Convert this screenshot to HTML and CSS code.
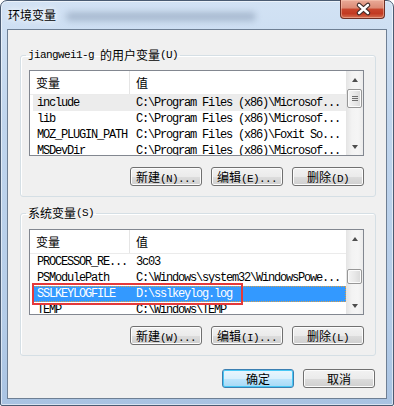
FILE: index.html
```html
<!DOCTYPE html>
<html lang="zh-CN">
<head>
    <meta charset="UTF-8">
    <title>环境变量</title>
    <link rel="stylesheet" href="styles.css">
</head>
<body>
    <div class="window">
        <div class="titlebar">
            <span class="title">环境变量</span>
            <span class="title-blur"></span>
            <button class="close" aria-label="关闭">
                <svg width="45" height="19" viewBox="0 0 45 19">
                    <path d="M19 5 L28 13 M28 5 L19 13" stroke="#3d2a28" stroke-width="4.6" stroke-linecap="round" fill="none"/>
                    <path d="M19 5 L28 13 M28 5 L19 13" stroke="#fff" stroke-width="2.4" stroke-linecap="round" fill="none"/>
                </svg>
            </button>
        </div>

        <div class="client">
            <fieldset class="group">
                <legend><span class="en">jiangwei1-g </span>的用户变量<span class="en">(U)</span></legend>
                <div class="list">
                    <div class="list-body">
                        <div class="list-head"><div class="col1">变量</div><div class="col2">值</div></div>
                        <div class="row hover"><div class="col1">include</div><div class="col2">C:\Program Files (x86)\Microsof...</div></div>
                        <div class="row"><div class="col1">lib</div><div class="col2">C:\Program Files (x86)\Microsof...</div></div>
                        <div class="row"><div class="col1">MOZ_PLUGIN_PATH</div><div class="col2">C:\Program Files (x86)\Foxit So...</div></div>
                        <div class="row"><div class="col1">MSDevDir</div><div class="col2">C:\Program Files (x86)\Microsof...</div></div>
                    </div>
                    <div class="scrollbar">
                        <div class="sb-btn"><span class="arrow-up"></span></div>
                        <div class="sb-track"><div class="thumb thumb-user"><i></i><i></i><i></i></div></div>
                        <div class="sb-btn"><span class="arrow-down"></span></div>
                    </div>
                </div>
                <div class="buttons">
                    <button class="btn">新建<span class="en">(N)...</span></button>
                    <button class="btn">编辑<span class="en">(E)...</span></button>
                    <button class="btn">删除<span class="en">(D)</span></button>
                </div>
            </fieldset>

            <fieldset class="group system">
                <legend>系统变量<span class="en">(S)</span></legend>
                <div class="list">
                    <div class="list-body">
                        <div class="list-head"><div class="col1">变量</div><div class="col2">值</div></div>
                        <div class="row"><div class="col1">PROCESSOR_RE...</div><div class="col2">3c03</div></div>
                        <div class="row"><div class="col1">PSModulePath</div><div class="col2">C:\Windows\system32\WindowsPowe...</div></div>
                        <div class="row selected"><div class="col1">SSLKEYLOGFILE</div><div class="col2">D:\sslkeylog.log</div></div>
                        <div class="row"><div class="col1">TEMP</div><div class="col2">C:\Windows\TEMP</div></div>
                    </div>
                    <div class="scrollbar">
                        <div class="sb-btn"><span class="arrow-up"></span></div>
                        <div class="sb-track"><div class="thumb thumb-system"></div></div>
                        <div class="sb-btn"><span class="arrow-down"></span></div>
                    </div>
                    <div class="mark"></div>
                </div>
                <div class="buttons">
                    <button class="btn">新建<span class="en">(W)...</span></button>
                    <button class="btn">编辑<span class="en">(I)...</span></button>
                    <button class="btn">删除<span class="en">(L)</span></button>
                </div>
            </fieldset>

            <div class="buttons dialog-buttons">
                <button class="btn default">确定</button>
                <button class="btn">取消</button>
            </div>
        </div>
    </div>
</body>
</html>
```

FILE: styles.css
```css
* {
    box-sizing: border-box;
}
body {
    margin: 0;
    font-family: "Noto Sans CJK SC", sans-serif;
    font-size: 12px;
    color: #000;
}
.en {
    font-family: "Liberation Mono", monospace;
    font-size: 11px;
    letter-spacing: -0.6px;
    white-space: pre;
}
.window {
    width: 394px;
    height: 406px;
    border: 1px solid #4a5b72;
    border-radius: 7px 7px 2px 2px;
    background: linear-gradient(180deg, #d2e2f4 0%, #c0d5ed 30%, #b4cce8 80%, #a9c3e2 100%);
    box-shadow: inset 0 0 0 1px rgba(255, 255, 255, 0.55);
    padding: 0 6px 6px;
    display: flex;
    flex-direction: column;
}
.titlebar {
    height: 28px;
    display: flex;
    align-items: flex-start;
}
.title {
    padding-left: 1px;
    line-height: 28px;
    text-shadow: 0 0 5px #fff, 0 0 9px rgba(255, 255, 255, 0.9);
}
.title-blur {
    width: 190px;
    height: 9px;
    margin: 11px 0 0 10px;
    border-radius: 5px;
    background: rgba(80, 100, 130, 0.3);
    filter: blur(3px);
}
.close {
    margin: -1px 2px 0 auto;
    width: 45px;
    height: 19px;
    padding: 0;
    border: 1px solid #6e3026;
    border-top: none;
    border-radius: 0 0 4px 4px;
    background: linear-gradient(180deg, #e9aa98 0%, #dc8a74 45%, #c8462d 50%, #c23a22 75%, #d46f52 100%);
    box-shadow: inset 0 0 0 1px rgba(255, 210, 190, 0.45);
}
.close svg {
    display: block;
    margin: -1px;
}
.client {
    flex: 1;
    background: #f0f0f0;
    border: 1px solid #6e7f94;
    padding: 18px 10px 0 12px;
    display: flex;
    flex-direction: column;
}
.group {
    margin: 0;
    min-width: 0;
    padding: 8px 11px 10px 8px;
    border: 1px solid #d5dfe5;
    border-radius: 3px;
    box-shadow: inset 1px 1px 0 #fff;
}
.group.system {
    margin-top: 9px;
    padding-top: 9px;
}
.group legend {
    height: 14px;
    padding: 0 2px;
    margin-left: -3px;
    line-height: 14px;
    display: flex;
    align-items: center;
}
.list {
    position: relative;
    display: flex;
    height: 86px;
    border: 1px solid #828790;
    background: #fff;
}
.list-body {
    flex: 1;
    overflow: hidden;
}
.list-head {
    display: flex;
    height: 24px;
    line-height: 23px;
    border-bottom: 1px solid #ebebeb;
}
.list-head .col1 {
    width: 100px;
    padding-left: 6px;
    border-right: 1px solid #e5e5e5;
}
.list-head .col2 {
    padding-left: 6px;
}
.row {
    display: flex;
    height: 16px;
    margin-left: 3px;
    line-height: 16px;
    font-family: "Liberation Mono", monospace;
    font-size: 12px;
    letter-spacing: -1.2px;
    white-space: nowrap;
}
.row .col1 {
    width: 97px;
    padding-left: 4px;
}
.row .col2 {
    padding-left: 6px;
}
.row.hover {
    background: #ececec;
}
.row.selected {
    background: #3399ff;
    color: #fff;
    outline: 1px dotted #d9a04a;
    outline-offset: -1px;
}
.scrollbar {
    width: 17px;
    display: flex;
    flex-direction: column;
    background: linear-gradient(90deg, #e4e4e4 0%, #f3f3f3 35%, #f5f5f5 70%, #ececec 100%);
}
.sb-btn {
    height: 17px;
    display: flex;
    align-items: center;
    justify-content: center;
}
.arrow-up,
.arrow-down {
    width: 0;
    height: 0;
    border-left: 3.5px solid transparent;
    border-right: 3.5px solid transparent;
}
.arrow-up {
    border-bottom: 4px solid #4e4e4e;
}
.arrow-down {
    border-top: 4px solid #4e4e4e;
}
.sb-track {
    flex: 1;
}
.thumb {
    margin: 0 1px;
    border: 1px solid #979797;
    border-radius: 2px;
    background: linear-gradient(90deg, #f4f4f4 0%, #e8e8e8 50%, #d9d9d9 100%);
    box-shadow: inset 0 0 0 1px #fbfbfb;
    display: flex;
    flex-direction: column;
    align-items: center;
    justify-content: center;
    gap: 1px;
}
.thumb i {
    display: block;
    width: 6px;
    height: 1px;
    background: #6e6e6e;
}
.thumb-user {
    margin-top: 1px;
    height: 19px;
}
.thumb-system {
    margin-top: 22px;
    height: 15px;
}
.mark {
    position: absolute;
    left: 2px;
    top: 53px;
    width: 211px;
    height: 22px;
    border: 2px solid #e5393a;
}
.buttons {
    display: flex;
    justify-content: flex-end;
    gap: 9px;
    margin-top: 11px;
}
.dialog-buttons {
    margin-top: 13px;
    margin-right: 1px;
}
.btn {
    width: 72px;
    height: 19px;
    padding: 0;
    font-family: "Noto Sans CJK SC", sans-serif;
    font-size: 12px;
    line-height: 17px;
    color: #000;
    border: 1px solid #707070;
    border-radius: 3px;
    background: linear-gradient(180deg, #f2f2f2 0%, #ebebeb 50%, #dddddd 51%, #cfcfcf 100%);
    box-shadow: inset 0 0 0 1px #fcfcfc;
}
.btn.default {
    border-color: #3c7fb1;
    background: linear-gradient(180deg, #eaf6fd 0%, #d9f0fc 50%, #bee6fd 51%, #a7d9f5 100%);
    box-shadow: inset 0 0 0 1px #48c8f5;
}
```
